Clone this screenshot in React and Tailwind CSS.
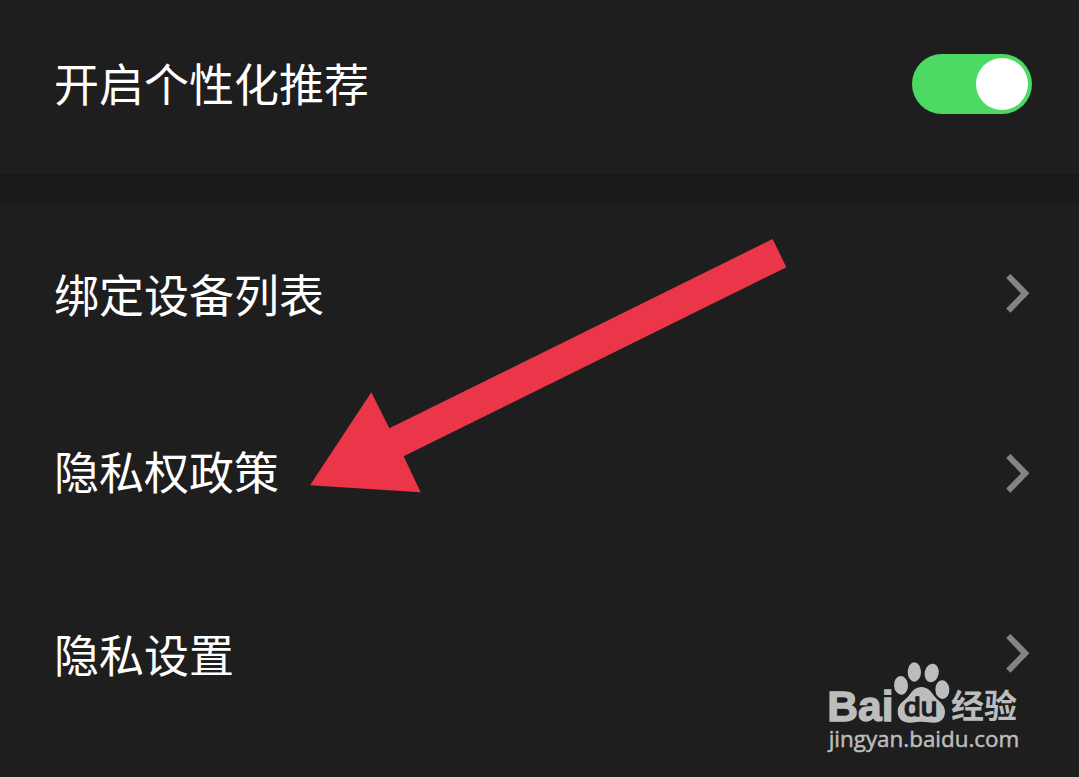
const rows = [
  { label: '绑定设备列表', offset: '' },
  { label: '隐私权政策', offset: 'mb-1.5' },
  { label: '隐私设置', offset: '' },
];

function Chevron() {
  return (
    <svg className="h-10 w-6" viewBox="0 0 24 40" fill="none" stroke="#848484" strokeWidth="6">
      <path d="M2.3 2L19.2 19.3L2.3 36.6" />
    </svg>
  );
}

function Toggle() {
  return (
    <button className="flex h-[60px] w-[120px] items-center justify-end rounded-full bg-[#4cd964] pr-1">
      <span className="size-[52px] rounded-full bg-white" />
    </button>
  );
}

function Arrow() {
  return (
    <svg className="absolute top-[220px] left-[290px] h-[290px] w-[520px]" viewBox="0 0 1560 870">
      <polygon points="60,796 244,517 298,625 1448,57 1489,142 341,709 392,817" fill="#ea3648" />
    </svg>
  );
}

function Watermark() {
  return (
    <svg className="absolute right-0 bottom-0 h-[157px] w-[269px]" viewBox="0 0 807 471" fill="#bdbdbd">
      <text
        x="52"
        y="303"
        fontSize="129"
        fontWeight="700"
        textLength="199"
        lengthAdjust="spacingAndGlyphs"
        stroke="#bdbdbd"
        strokeWidth="4"
        className="font-['Liberation_Sans',sans-serif]"
      >
        Bai
      </text>
      {/* paw */}
      <ellipse cx="273" cy="196" rx="21" ry="28" transform="rotate(-5 273 196)" />
      <ellipse cx="313" cy="156" rx="20" ry="29" />
      <ellipse cx="365" cy="159" rx="21" ry="28" transform="rotate(12 365 159)" />
      <ellipse cx="397" cy="209" rx="21" ry="28" transform="rotate(-3 397 209)" />
      <path d="M334 201C351 201 363 213 371 226C382 242 405 252 405 275C405 295 392 308 372 308C358 308 350 305 334 305C318 305 312 308 297 308C275 308 263 294 263 274C263 250 286 241 298 225C307 212 318 201 334 201Z" />
      <text
        x="282"
        y="289"
        fontSize="79"
        fill="#1e1e1e"
        stroke="#1e1e1e"
        strokeWidth="4"
        textLength="100"
        lengthAdjust="spacingAndGlyphs"
        className="font-['Liberation_Sans',sans-serif]"
      >
        du
      </text>
      <text
        x="423"
        y="295"
        fontSize="99"
        fontWeight="700"
        textLength="198"
        className="font-['Noto_Sans_CJK_SC',sans-serif]"
      >
        经验
      </text>
      <text
        x="56"
        y="381"
        fontSize="67"
        textLength="572"
        lengthAdjust="spacingAndGlyphs"
        stroke="#bdbdbd"
        strokeWidth="1.5"
        className="font-['Open_Sans',sans-serif]"
      >
        jingyan.baidu.com
      </text>
    </svg>
  );
}

export default function App() {
  return (
    <div className="relative flex h-[777px] w-[1079px] flex-col overflow-hidden bg-[#1e1e1e] font-['Noto_Sans_CJK_SC',sans-serif] text-[45px] leading-[60px] text-white">
      <div className="flex h-[174px] items-center justify-between pr-[47px] pb-[7px] pl-[54px]">
        <span className="mb-0.5">开启个性化推荐</span>
        <Toggle />
      </div>
      <div className="h-[30px] bg-[#191919]" />
      {rows.map((row) => (
        <div key={row.label} className="flex h-[180px] items-center justify-between pr-[49px] pl-[54px]">
          <span className={row.offset}>{row.label}</span>
          <Chevron />
        </div>
      ))}
      <Arrow />
      <Watermark />
    </div>
  );
}
